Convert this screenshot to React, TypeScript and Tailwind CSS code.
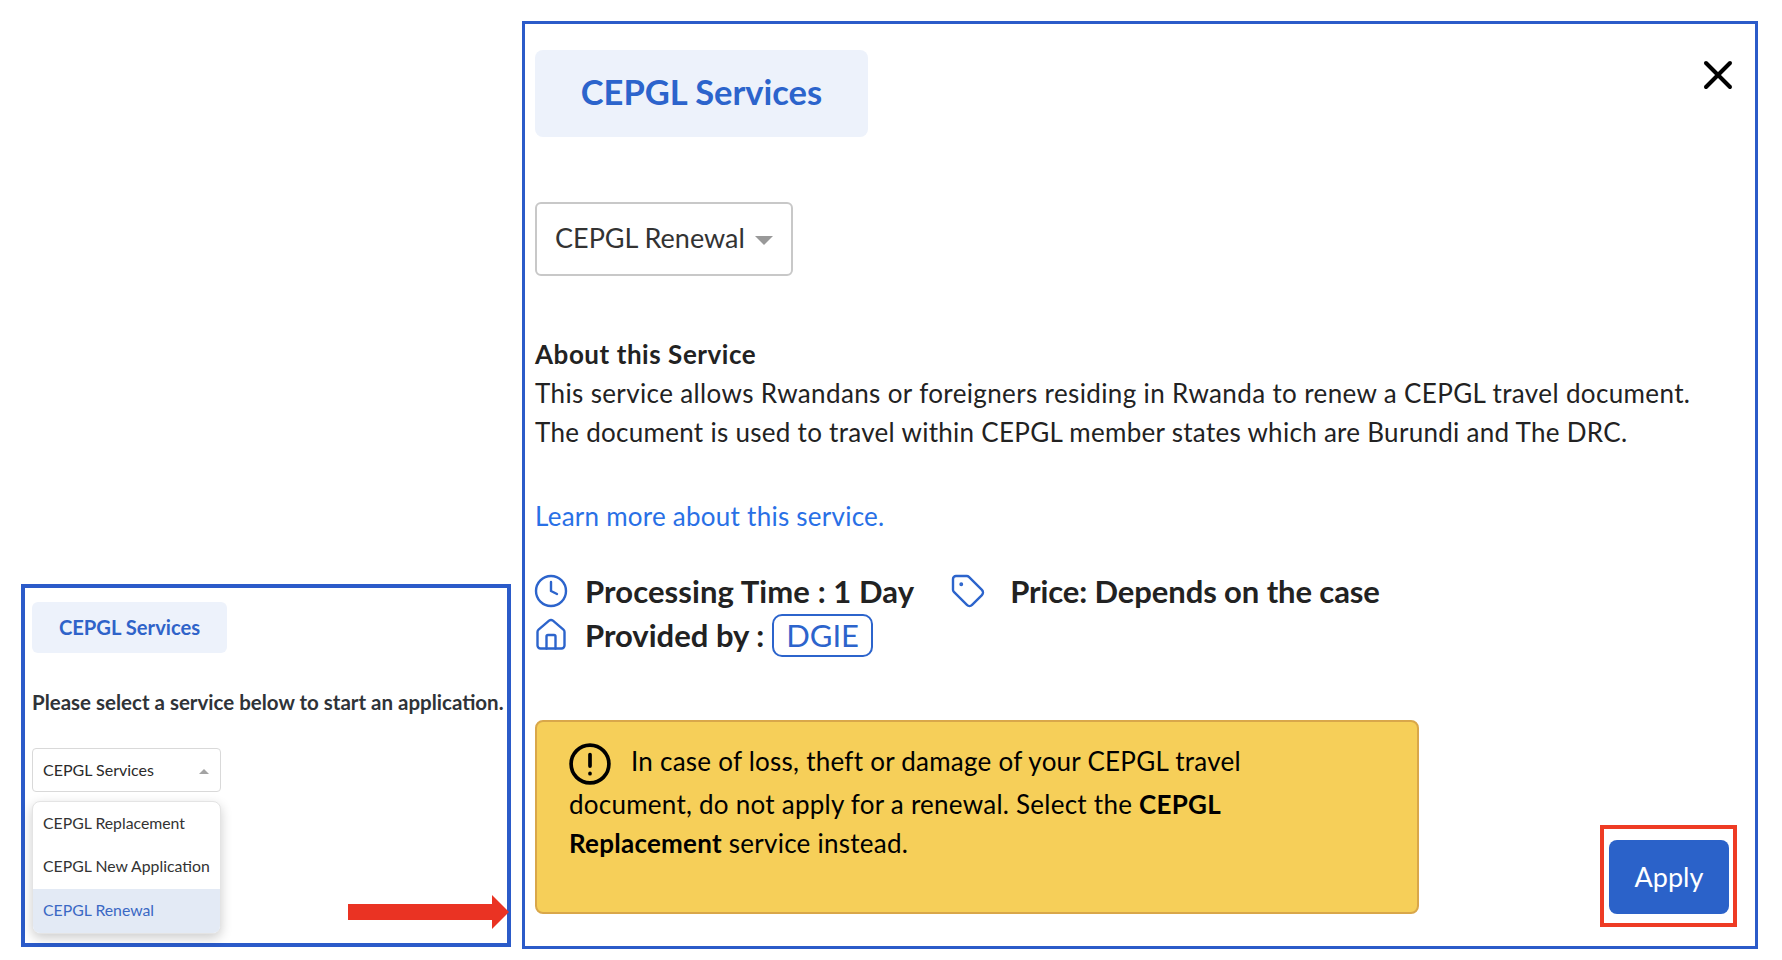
import { Clock, Tag, House, X } from "lucide-react";

const services = ["CEPGL Replacement", "CEPGL New Application", "CEPGL Renewal"];

function SelectPanel() {
  return (
    <div className="relative mb-[2px] flex h-[363px] w-[490px] shrink-0 flex-col border-4 border-[#2b5bc9] pl-[7px] pt-[14px]">
      <div className="flex h-[51px] w-[195px] items-center justify-center rounded-md bg-[#edf2fb] pb-[1px] text-[20.2px] font-bold text-[#2f63c9]">
        CEPGL Services
      </div>
      <p className="mt-[35px] h-[28px] whitespace-nowrap text-[20.5px] font-bold leading-[28px] text-[#2f3338]">
        Please select a service below to start an application.
      </p>
      <div className="mt-[32px] flex h-[44px] w-[189px] items-center justify-between rounded border border-[#d9d9d9] pl-[10px] pr-[11px] text-[16px] text-[#2a2a2a]">
        <span>CEPGL Services</span>
        <span className="mt-[3px] h-0 w-0 border-x-[5px] border-b-[5px] border-x-transparent border-b-[#a3a3a3]" />
      </div>
      <ul className="mt-[9px] w-[189px] overflow-hidden rounded-lg border border-[#e4e4e4] bg-white text-[15.8px] shadow-[0_4px_12px_rgba(0,0,0,0.2)]">
        {services.map((name) => (
          <li
            key={name}
            className={
              name === "CEPGL Renewal"
                ? "flex h-[43.5px] items-center whitespace-nowrap bg-[#e3eaf5] pb-[2px] pl-[10px] text-[#3a68c4]"
                : "flex h-[43.5px] items-center whitespace-nowrap pb-[2px] pl-[10px] text-[#333333]"
            }
          >
            {name}
          </li>
        ))}
      </ul>
      {/* red arrow pointing at the details panel */}
      <div className="absolute right-[-2px] top-[307px] flex items-center">
        <div className="h-[16px] w-[144px] bg-[#ea3323]" />
        <div className="h-0 w-0 border-y-[17px] border-l-[17px] border-y-transparent border-l-[#ea3323]" />
      </div>
    </div>
  );
}

function DetailsPanel() {
  return (
    <div className="ml-[11px] flex h-[928px] w-[1236px] shrink-0 flex-col border-[3px] border-[#2b5bc9] pl-[10px] pr-[18px] pt-[26px] text-[#222222]">
      <div className="flex items-start justify-between">
        <div className="flex h-[87px] w-[333px] items-center justify-center rounded-lg bg-[#edf2fb] pb-[3px] text-[34.5px] font-bold text-[#2c64cc]">
          CEPGL Services
        </div>
        <X size={48} strokeWidth={2} className="-mr-[5px] mt-px text-black" />
      </div>

      <div className="mt-[65px] flex h-[74px] w-[258px] items-center justify-between rounded-md border-2 border-[#c8c8c8] pb-[1px] pl-[18px] pr-[18px] text-[27px] text-[#333333]">
        <span>CEPGL Renewal</span>
        <span className="mt-[4px] h-0 w-0 border-x-[9px] border-t-[9px] border-x-transparent border-t-[#999999]" />
      </div>

      <div className="mt-[59px] text-[26px] leading-[39px]">
        <p className="font-bold tracking-[0.55px]">About this Service</p>
        <p className="tracking-[0.37px]">This service allows Rwandans or foreigners residing in Rwanda to renew a CEPGL travel document.</p>
        <p className="tracking-[0.29px]">The document is used to travel within CEPGL member states which are Burundi and The DRC.</p>
      </div>

      <a className="mt-[45px] text-[26px] leading-[39px] tracking-[0.25px] text-[#2970e6]">Learn more about this service.</a>

      <div className="mt-[33px] flex h-[44px] items-center text-[31px] font-bold">
        <Clock size={36} strokeWidth={1.6} className="-ml-[2px] text-[#2c64cc]" />
        <span className="ml-[16px] tracking-[0.1px]">Processing Time : 1 Day</span>
        <Tag size={36} strokeWidth={1.6} className="ml-[36px] text-[#2c64cc]" />
        <span className="ml-[24px] tracking-[-0.1px]">Price: Depends on the case</span>
      </div>
      <div className="flex h-[44px] items-center text-[31px] font-bold">
        <House size={36} strokeWidth={1.6} className="-ml-[2px] text-[#2c64cc]" />
        <span className="ml-[16px]">Provided by :</span>
        <span className="ml-[8px] flex h-[43px] w-[101px] items-center justify-center rounded-[10px] border-2 border-[#2c64cc] font-normal text-[#2c64cc]">
          DGIE
        </span>
      </div>

      <div className="mt-[63px] flex items-end justify-between">
        <div className="mb-[13px] h-[194px] w-[884px] rounded-lg border-2 border-[#d9a74a] bg-[#f6cf59] pl-[32px] pr-[150px] pt-[20px] text-[26px] leading-[39px] tracking-[0.25px] text-black">
          <svg viewBox="0 0 40 40" className="mr-[20px] inline-block h-[42px] w-[42px] align-middle" fill="none" stroke="black" strokeWidth="3.5" strokeLinecap="round">
            <circle cx="20" cy="20" r="18" />
            <path d="M20 11v11M20 29v.2" />
          </svg>
          In case of loss, theft or damage of your CEPGL travel document, do not apply for a renewal. Select the <b>CEPGL Replacement</b> service instead.
        </div>
        <div className="border-4 border-[#ee3b24] pb-[9px] pl-[5px] pr-[4px] pt-[11px]">
          <button className="flex h-[74px] w-[120px] items-center justify-center rounded-lg bg-[#2b62c9] text-[27px] text-white">
            Apply
          </button>
        </div>
      </div>
    </div>
  );
}

export default function App() {
  return (
    <div className="flex h-[960px] items-end bg-white pb-[11px] pl-[21px] font-['Lato',sans-serif]">
      <SelectPanel />
      <DetailsPanel />
    </div>
  );
}
